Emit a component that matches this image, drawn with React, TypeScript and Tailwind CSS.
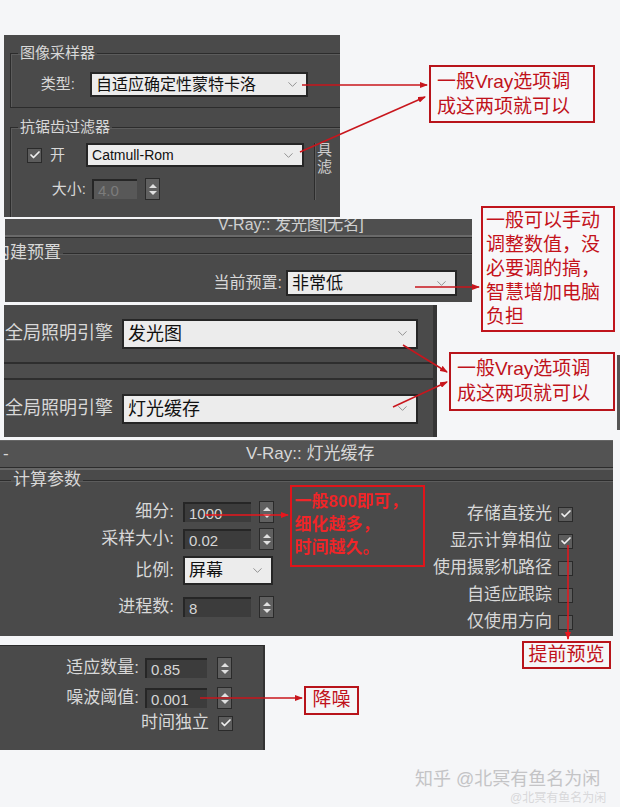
import React from "react";
import { Check, ChevronDown } from "lucide-react";

const font = "font-['Liberation_Sans','Noto_Sans_CJK_SC',sans-serif]";

function Dropdown({ text, w, h, size = "text-[16px]" }: { text: string; w: string; h: string; size?: string }) {
  return (
    <div className={`${w} ${h} flex items-center justify-between bg-[#ececec] border-2 border-[#262626] pl-[4px] pr-[6px] text-[#111] ${size}`}>
      <span className="leading-none">{text}</span>
      <ChevronDown size={15} strokeWidth={1.5} className="text-[#8c8c8c]" />
    </div>
  );
}

function Spin() {
  return (
    <div className="flex flex-col items-center justify-center gap-[3px] w-[15px] h-[22px] bg-[#606060] border border-[#2a2a2a]">
      <span className="w-0 h-0 border-x-[4px] border-x-transparent border-b-[4px] border-b-[#e0e0e0]" />
      <span className="w-0 h-0 border-x-[4px] border-x-transparent border-t-[4px] border-t-[#e0e0e0]" />
    </div>
  );
}

function Field({ value, w, dim = false }: { value: string; w: string; dim?: boolean }) {
  return (
    <div
      className={`${w} h-[20px] flex items-center pl-[4px] text-[15px] leading-none border-t-2 border-l-2 border-[#262626] ${
        dim ? "bg-[#585858] text-[#7c7c7c]" : "bg-[#3c3c3c] text-[#d6d6d6]"
      }`}
    >
      {value}
    </div>
  );
}

function Box({ on }: { on: boolean }) {
  return (
    <div className="w-[15px] h-[15px] flex items-center justify-center bg-[#5c5c5c] border border-[#2a2a2a]">
      {on && <Check size={12} strokeWidth={3.5} className="text-[#f0f0f0]" />}
    </div>
  );
}

export default function App() {
  return (
    <div className={`relative w-[620px] h-[807px] overflow-hidden bg-[#f5f6f8] pt-[35px] ${font}`}>
      {/* 图像采样器 / 抗锯齿过滤器 */}
      <div className="ml-[4px] w-[336px] h-[182px] bg-[#4a4a4a] overflow-hidden pt-[9px] text-[#d8d8d8]">
        <fieldset className="ml-[6px] mr-[-10px] h-[64px] border border-[#2c2c2c] shadow-[inset_1px_1px_0_#5c5c5c]">
          <legend className="ml-[7px] px-[2px] text-[15px] leading-[18px]">图像采样器</legend>
          <div className="flex items-center mt-[10px]">
            <span className="w-[64px] text-right text-[15px]">类型:</span>
            <div className="ml-[15px]">
              <Dropdown text="自适应确定性蒙特卡洛" w="w-[218px]" h="h-[25px]" />
            </div>
          </div>
        </fieldset>
        <fieldset className="ml-[6px] mr-[-10px] mt-[10px] h-[120px] border border-b-0 border-[#2c2c2c] shadow-[inset_1px_1px_0_#5c5c5c]">
          <legend className="ml-[7px] px-[2px] text-[15px] leading-[18px]">抗锯齿过滤器</legend>
          <div className="flex mt-[7px]">
            <div className="w-[300px]">
              <div className="flex items-center h-[24px]">
                <div className="ml-[16px]">
                  <Box on />
                </div>
                <span className="ml-[8px] text-[15px]">开</span>
                <div className="ml-[21px]">
                  <Dropdown text="Catmull-Rom" w="w-[218px]" h="h-[24px]" size="text-[14px]" />
                </div>
              </div>
              <div className="flex items-center mt-[11px] h-[22px]">
                <span className="w-[75px] text-right text-[15px]">大小:</span>
                <div className="ml-[6px]">
                  <Field value="4.0" w="w-[45px]" dim />
                </div>
                <div className="ml-[8px]">
                  <Spin />
                </div>
              </div>
            </div>
            <div className="ml-[3px] border-l border-[#2c2c2c] shadow-[inset_1px_0_0_#5c5c5c] pl-[2px] text-[15px] leading-[17px] text-[#cfcfcf]">
              <div className="-mt-[2px]">具</div>
              <div>滤</div>
            </div>
          </div>
        </fieldset>
      </div>

      {/* V-Ray:: 发光图 */}
      <div className="ml-[5px] mt-[2px] w-[467px] h-[83px] bg-[#4a4a4a] overflow-hidden text-[#d8d8d8]">
        <div className="h-[16px] overflow-hidden bg-[#4f4f4f]">
          <div className="pl-[213px] -mt-[4px] text-[16px] leading-[20px] text-[#cfcfcf]">V-Ray:: 发光图[无名]</div>
        </div>
        <div className="h-[3px] border-t-2 border-[#6a6a6a] border-b border-b-[#2e2e2e]" />
        <fieldset className="ml-[-15px] mr-[-4px] mt-[4px] h-[60px] border border-b-0 border-[#2c2c2c] shadow-[inset_0_1px_0_#5c5c5c]">
          <legend className="px-[2px] text-[17px] leading-[22px]">内建预置</legend>
          <div className="flex items-center justify-end pr-[18px] mt-[6px]">
            <span className="text-[16px] mr-[4px]">当前预置:</span>
            <Dropdown text="非常低" w="w-[171px]" h="h-[26px]" size="text-[17px]" />
          </div>
        </fieldset>
      </div>

      {/* 全局照明引擎 */}
      <div className="ml-[4px] mt-[3px] w-[433px] h-[132px] bg-[#4a4a4a] border-r-4 border-[#353535] text-[#d8d8d8]">
        <div className="h-[57px] flex items-center">
          <span className="w-[114px] pl-[1px] text-[18px]">全局照明引擎</span>
          <div className="ml-[4px]">
            <Dropdown text="发光图" w="w-[296px]" h="h-[30px]" size="text-[18px]" />
          </div>
        </div>
        <div className="h-[18px] border-t-2 border-b-2 border-[#2e2e2e] bg-[#4d4d4d]" />
        <div className="h-[57px] flex items-center">
          <span className="w-[114px] pl-[1px] text-[18px]">全局照明引擎</span>
          <div className="ml-[4px]">
            <Dropdown text="灯光缓存" w="w-[296px]" h="h-[30px]" size="text-[18px]" />
          </div>
        </div>
      </div>

      {/* V-Ray:: 灯光缓存 */}
      <div className="mt-[3px] w-[613px] h-[196px] bg-[#4a4a4a] overflow-hidden text-[#d8d8d8]">
        <div className="h-[27px] flex items-center bg-[#535353] border-t border-[#666]">
          <span className="pl-[3px] w-[246px] text-[17px]">-</span>
          <span className="text-[17px]">V-Ray:: 灯光缓存</span>
        </div>
        <div className="h-[3px] border-t border-[#2c2c2c] border-b-2 border-b-[#666]" />
        <fieldset className="ml-[-2px] mr-[-4px] h-[166px] border border-b-0 border-[#2c2c2c] shadow-[inset_0_1px_0_#5c5c5c]">
          <legend className="ml-[12px] px-[2px] text-[17px] leading-[20px]">计算参数</legend>
          <div className="flex justify-between">
            <div className="w-[280px] pt-[11px]">
              <div className="flex items-center h-[22px]">
                <span className="w-[177px] text-right text-[17px] pr-[2px]">细分:</span>
                <div className="ml-[7px]">
                  <Field value="1000" w="w-[68px]" />
                </div>
                <div className="ml-[8px]">
                  <Spin />
                </div>
              </div>
              <div className="flex items-center h-[22px] mt-[5px]">
                <span className="w-[177px] text-right text-[17px] pr-[2px]">采样大小:</span>
                <div className="ml-[7px]">
                  <Field value="0.02" w="w-[68px]" />
                </div>
                <div className="ml-[8px]">
                  <Spin />
                </div>
              </div>
              <div className="flex items-center h-[29px] mt-[6px]">
                <span className="w-[177px] text-right text-[17px] pr-[2px]">比例:</span>
                <div className="ml-[7px]">
                  <Dropdown text="屏幕" w="w-[90px]" h="h-[29px]" size="text-[17px]" />
                </div>
              </div>
              <div className="flex items-center h-[22px] mt-[11px]">
                <span className="w-[177px] text-right text-[17px] pr-[2px]">进程数:</span>
                <div className="ml-[7px]">
                  <Field value="8" w="w-[68px]" />
                </div>
                <div className="ml-[8px]">
                  <Spin />
                </div>
              </div>
            </div>
            <div className="pt-[13px] pr-[43px] flex flex-col items-end gap-[5px]">
              {[
                ["存储直接光", true],
                ["显示计算相位", true],
                ["使用摄影机路径", false],
                ["自适应跟踪", false],
                ["仅使用方向", false],
              ].map(([label, on]) => (
                <div key={label as string} className="flex items-center h-[22px]">
                  <span className="text-[17px] mr-[6px]">{label as string}</span>
                  <Box on={on as boolean} />
                </div>
              ))}
            </div>
          </div>
        </fieldset>
      </div>

      {/* 适应数量 */}
      <div className="mt-[9px] w-[265px] h-[105px] bg-[#4a4a4a] border-r-2 border-[#333] border-t border-t-[#2c2c2c] pt-[11px] text-[#d8d8d8]">
        <div className="flex items-center h-[22px]">
          <span className="w-[139px] text-right text-[17px]">适应数量:</span>
          <div className="ml-[6px]">
            <Field value="0.85" w="w-[62px]" />
          </div>
          <div className="ml-[10px]">
            <Spin />
          </div>
        </div>
        <div className="flex items-center h-[22px] mt-[8px]">
          <span className="w-[139px] text-right text-[17px]">噪波阈值:</span>
          <div className="ml-[6px]">
            <Field value="0.001" w="w-[62px]" />
          </div>
          <div className="ml-[10px]">
            <Spin />
          </div>
        </div>
        <div className="flex items-center h-[22px] mt-[3px]">
          <span className="w-[209px] text-right text-[17px]">时间独立</span>
          <div className="ml-[9px]">
            <Box on />
          </div>
        </div>
      </div>

      {/* annotations */}
      <div className="absolute left-[429px] top-[65px] w-[166px] h-[58px] border-2 border-[#b8141b] bg-[#f7f7f9] px-[6px] pt-[2px] text-[19px] leading-[25px] text-[#c0121b]">
        <div>一般Vray选项调</div>
        <div>成这两项就可以</div>
      </div>
      <div className="absolute left-[481px] top-[206px] w-[134px] h-[126px] border-2 border-[#c0141c] bg-[#f7f7f9] px-[3px] pt-[1px] text-[19px] leading-[24px] text-[#c4121b]">
        <div>一般可以手动</div>
        <div>调整数值，没</div>
        <div>必要调的搞，</div>
        <div>智慧增加电脑</div>
        <div>负担</div>
      </div>
      <div className="absolute left-[449px] top-[352px] w-[166px] h-[59px] border-2 border-[#b8141b] bg-[#f7f7f9] px-[6px] pt-[2px] text-[19px] leading-[25px] text-[#c0121b]">
        <div>一般Vray选项调</div>
        <div>成这两项就可以</div>
      </div>
      <div className="absolute left-[617px] top-[355px] w-[3px] h-[75px] bg-[#555]" />
      <div className="absolute left-[290px] top-[485px] w-[135px] h-[82px] border-2 border-[#e0141a] px-[3px] pt-[3px] text-[17px] leading-[23px] font-bold text-[#f0262a] blur-[0.4px]">
        <div>一般800即可，</div>
        <div>细化越多，</div>
        <div>时间越久。</div>
      </div>
      <div className="absolute left-[522px] top-[641px] w-[89px] h-[28px] border-2 border-[#b8141b] flex items-center justify-center text-[19px] text-[#c0121b]">
        提前预览
      </div>
      <div className="absolute left-[304px] top-[686px] w-[55px] h-[29px] border-2 border-[#b8141b] flex items-center justify-center text-[19px] text-[#c0121b]">
        降噪
      </div>
      <div className="absolute left-[415px] top-[766px] text-[18px] text-[#c4c4c6]">知乎 @北冥有鱼名为闲</div>
      <div className="absolute left-[510px] top-[789px] text-[12px] text-[#d8d8da]">@北冥有鱼名为闲</div>

      <svg className="absolute left-0 top-0" width="620" height="807">
        <defs>
          <marker id="ah" markerWidth="8" markerHeight="6" refX="7" refY="3" orient="auto" markerUnits="userSpaceOnUse">
            <path d="M0,0 L8,3 L0,6 Z" fill="#c8161d" />
          </marker>
          <marker id="ah2" markerWidth="8" markerHeight="6" refX="7" refY="3" orient="auto" markerUnits="userSpaceOnUse">
            <path d="M0,0 L8,3 L0,6 Z" fill="#e8161d" />
          </marker>
        </defs>
        <g stroke="#c8161d" strokeWidth="1.5" fill="none">
          <line x1="302" y1="85" x2="427" y2="85" markerEnd="url(#ah)" />
          <line x1="300" y1="152" x2="425" y2="97" markerEnd="url(#ah)" />
          <line x1="415" y1="287" x2="479" y2="287" markerEnd="url(#ah)" />
          <line x1="403" y1="345" x2="447" y2="372" markerEnd="url(#ah)" />
          <line x1="393" y1="407" x2="447" y2="382" markerEnd="url(#ah)" />
          <line x1="200" y1="698" x2="302" y2="698" markerEnd="url(#ah)" />
        </g>
        <g stroke="#e8161d" strokeWidth="1.5" fill="none">
          <line x1="205" y1="515" x2="288" y2="515" markerEnd="url(#ah2)" />
          <line x1="568" y1="545" x2="568" y2="639" markerEnd="url(#ah2)" />
        </g>
      </svg>
    </div>
  );
}
